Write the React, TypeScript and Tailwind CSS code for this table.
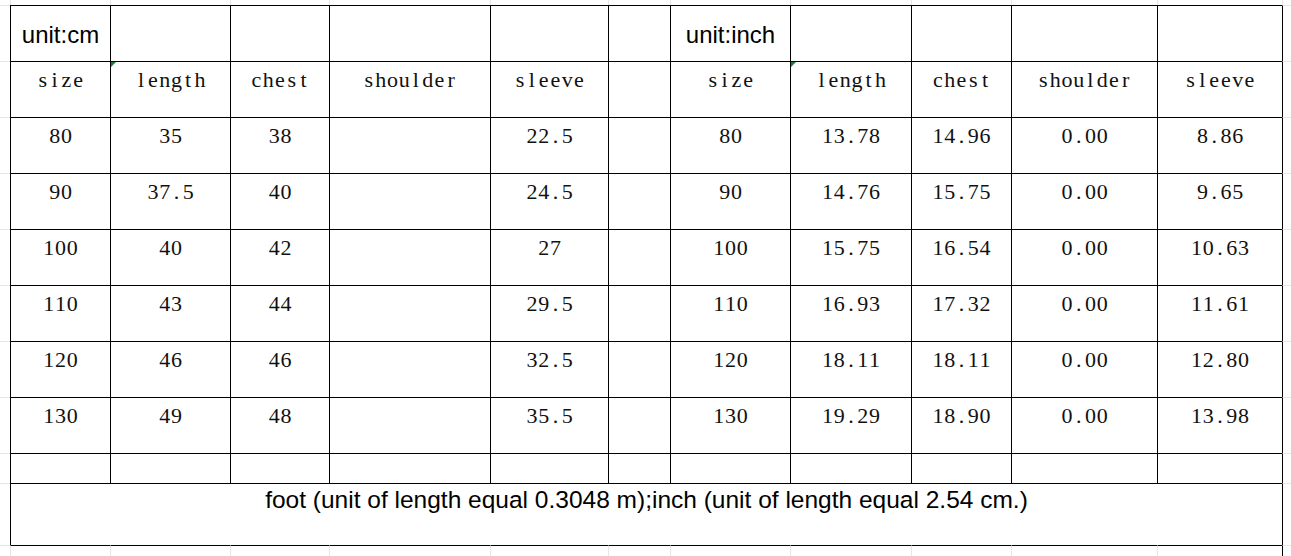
const sans = "font-['Liberation_Sans',Arial,sans-serif]"
const serif = "font-['Liberation_Serif','Times_New_Roman',serif]"

const unitRow = ['unit:cm', '', '', '', '', '', 'unit:inch', '', '', '', '']
const headRow = ['size', 'length', 'chest', 'shoulder', 'sleeve', '', 'size', 'length', 'chest', 'shoulder', 'sleeve']
const dataRows = [
	['80', '35', '38', '', '22.5', '', '80', '13.78', '14.96', '0.00', '8.86'],
	['90', '37.5', '40', '', '24.5', '', '90', '14.76', '15.75', '0.00', '9.65'],
	['100', '40', '42', '', '27', '', '100', '15.75', '16.54', '0.00', '10.63'],
	['110', '43', '44', '', '29.5', '', '110', '16.93', '17.32', '0.00', '11.61'],
	['120', '46', '46', '', '32.5', '', '120', '18.11', '18.11', '0.00', '12.80'],
	['130', '49', '48', '', '35.5', '', '130', '19.29', '18.90', '0.00', '13.98']
]
const empty = Array(11).fill('')

function MarginLeft() {
	return <div className="border-t border-[#e6e6e6]" />
}

function MarginRight() {
	return <div className="border-t border-l border-t-[#e6e6e6] border-l-black" />
}

// half-width cells, the way the sheet's CJK font sets latin text
function Mono({ text }: { text: string }) {
	return (
		<>
			{text.split('').map((ch, i) => (
				<span key={i} className="inline-block w-[11.75px] text-center">
					{ch}
				</span>
			))}
		</>
	)
}

function Cell({ text, kind, marker }: { text: string; kind: 'sans' | 'serif'; marker?: boolean }) {
	return (
		<div className="relative border-t border-l border-black bg-white text-center">
			{marker && (
				<div className="absolute top-0 left-0 w-0 h-0 border-t-[5px] border-r-[5px] border-t-[#1f7a35] border-r-transparent" />
			)}
			{text &&
				(kind === 'sans' ? (
					<div className={`${sans} text-[24px] leading-none pt-[17px] text-black`}>{text}</div>
				) : (
					<div className={`${serif} text-[22px] leading-none pt-[7px] text-[#111] whitespace-nowrap`}>
						<Mono text={text} />
					</div>
				))}
		</div>
	)
}

export default function App() {
	return (
		<div className="w-[1291px] h-[556px] bg-white overflow-hidden">
			<div className="grid grid-cols-[10px_100px_120px_99px_161px_118px_62px_120px_121px_100px_146px_125px_9px] grid-rows-[5px_56px_56px_56px_56px_56px_56px_56px_56px_30px_62px_11px]">
				{/* top margin gridlines */}
				<div />
				{Array.from({ length: 12 }).map((_, i) => (
					<div key={'t' + i} className="border-l border-[#e6e6e6]" />
				))}

				{/* unit row */}
				<MarginLeft />
				{unitRow.map((t, i) => (
					<Cell key={'u' + i} text={t} kind="sans" />
				))}
				<MarginRight />

				{/* header row */}
				<MarginLeft />
				{headRow.map((t, i) => (
					<Cell key={'h' + i} text={t} kind="serif" marker={i === 1 || i === 7} />
				))}
				<MarginRight />

				{dataRows.map((row, r) => [
					<MarginLeft key={'l' + r} />,
					...row.map((t, i) => <Cell key={r + '-' + i} text={t} kind="serif" />),
					<MarginRight key={'r' + r} />
				])}

				{/* empty row */}
				<MarginLeft />
				{empty.map((t, i) => (
					<Cell key={'e' + i} text={t} kind="serif" />
				))}
				<MarginRight />

				{/* footer */}
				<MarginLeft />
				<div className="col-span-11 border-t border-l border-black text-center">
					<div className={`${sans} text-[24.5px] leading-none pt-[4px] text-black whitespace-nowrap`}>
						foot (unit of length equal 0.3048 m);inch (unit of length equal 2.54 cm.)
					</div>
				</div>
				<MarginRight />

				{/* bottom margin gridlines */}
				<div className="border-t border-[#e6e6e6]" />
				{Array.from({ length: 11 }).map((_, i) => (
					<div key={'b' + i} className="border-t border-l border-t-black border-l-[#e6e6e6]" />
				))}
				<div className="border-t border-l border-[#e6e6e6] border-l-black" />
			</div>
		</div>
	)
}
